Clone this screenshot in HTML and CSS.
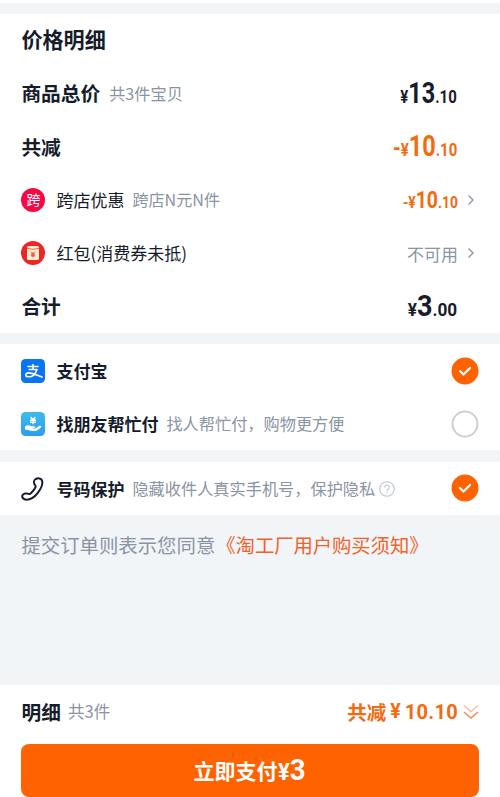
FILE: index.html
```html
<!DOCTYPE html>
<html lang="zh-CN">
<head>
<meta charset="utf-8">
<title>确认订单</title>
<link rel="stylesheet" href="styles.css">
</head>
<body>
<main class="page">
  <div class="prev-card"></div>
  <section class="card prices">
    <div class="row"><h1 class="title">价格明细</h1></div>
    <div class="row"><b class="head">商品总价</b><span class="note count">共3件宝贝</span><span class="price">¥<span class="int">13</span>.10</span></div>
    <div class="row"><b class="head">共减</b><span class="price orange"><span class="minus">-</span>¥<span class="int">10</span>.10</span></div>
    <div class="row detail">
      <span class="badge">跨</span>
      <span class="label">跨店优惠</span><span class="note">跨店N元N件</span>
      <span class="price orange small">-¥<span class="int">10</span>.10</span>
      <svg class="chevron" viewBox="0 0 8 12"><path d="M1.5 1.5 6 6 1.5 10.5"/></svg>
    </div>
    <div class="row detail">
      <svg class="icon" viewBox="0 0 24 24"><circle cx="12" cy="12" r="12" fill="#ed2526"/><rect x="6" y="5" width="12" height="14" rx="1.6" fill="#fff0cf"/><path d="M6 7.3Q12 9.5 18 7.3" fill="none" stroke="#ef6a49"/><path d="m10 10.5 2 2 2-2M9.8 13h4.4M9.8 14.8h4.4M12 12.5v4" fill="none" stroke="#e8382b"/></svg>
      <span class="label">红包(消费券未抵)</span>
      <span class="unavailable">不可用</span>
      <svg class="chevron" viewBox="0 0 8 12"><path d="M1.5 1.5 6 6 1.5 10.5"/></svg>
    </div>
    <div class="row"><b class="head">合计</b><span class="price total">¥<span class="int">3</span>.00</span></div>
  </section>

  <section class="card payments">
    <div class="row">
      <svg class="icon" viewBox="0 0 24 24"><rect width="24" height="24" rx="4.5" fill="#0b74f5"/><g fill="none" stroke="#fff" stroke-linecap="round"><path d="M7 7.600h10M12 5.400v4.800M8 10.500h7.800" stroke-width="1.500"/><path d="M15.800 10.700C14.400 14.800 11.200 17.800 8 17.800c-4.400 0-4.200-3.900-.6-3.900 4 0 8.300 2.300 13.600 4" stroke-width="1.600"/></g></svg>
      <b class="label">支付宝</b>
      <svg class="radio" viewBox="0 0 28 28"><circle cx="14" cy="14" r="13.500" fill="#ff6200"/><path d="m9 14 3.500 3.500 6.500-6.600" class="tick"/></svg>
    </div>
    <div class="row">
      <svg class="icon" viewBox="0 0 24 24"><defs><linearGradient id="sky" x2="0" y2="1"><stop stop-color="#3cbbed"/><stop offset="1" stop-color="#2a9eee"/></linearGradient></defs><rect width="24" height="24" rx="4.500" fill="url(#sky)"/><path d="m9.700 5 2.300 3 2.300-3M9 8.200h6M9 10.200h6M12 8v4.300" fill="none" stroke="#fff" stroke-width="1.400"/><path d="M4 14.500c2.300-2 4.500-1.400 6.200-.2h3.100c1.100 0 1.300 1.500.1 1.700l-3 .2 3.800.2 4.300-2.600c1.500-.6 2.300.7 1.300 1.600-2.300 2.200-4.600 3.700-7.300 3.700-2.500 0-4.300-1.500-8.500-1.700Z" fill="#fff"/></svg>
      <b class="label">找朋友帮忙付</b><span class="note">找人帮忙付，购物更方便</span>
      <svg class="radio" viewBox="0 0 28 28"><circle cx="14" cy="14" r="12.500" fill="#fff" stroke="#cbd0d6" stroke-width="2"/></svg>
    </div>
  </section>

  <section class="card privacy">
    <div class="row">
      <svg class="icon" viewBox="0 0 24 24"><path d="M14.300 2.300C16.600.8 20.200 1 21 3.400c.9 2.900-.9 8.100-4 12.200-3.200 4.200-7.800 7.100-11.600 7.100-2.900 0-4.800-2.400-4-4.300.8-1.800 4.200-2.600 6.300-1.500.9.4 1.700-.1 2.700-1.100 1.600-1.600 3.500-4 4.100-5.700.4-1.100-.2-1.600-.8-2.500-1-1.500-1.100-4.100.6-5.300Z" fill="none" stroke="#161c2b" stroke-width="2" stroke-linejoin="round"/></svg>
      <b class="label">号码保护</b><span class="note privacy-note">隐藏收件人真实手机号，保护隐私</span>
      <svg class="help" viewBox="0 0 16 16"><circle cx="8" cy="8" r="7.300"/><path d="M5.700 6.500c0-3.300 4.700-3.100 4.700-.3C10.400 8 8 7.900 8 9.900m0 1.200v1.200"/></svg>
      <svg class="radio" viewBox="0 0 28 28"><circle cx="14" cy="14" r="13.500" fill="#ff6200"/><path d="m9 14 3.500 3.500 6.500-6.600" class="tick"/></svg>
    </div>
  </section>

  <p class="terms">提交订单则表示您同意<a>《淘工厂用户购买须知》</a></p>

  <footer class="footer">
    <div class="summary">
      <b class="head">明细</b><span class="note">共3件</span>
      <span class="saving"><span>共减</span><span class="yen">¥</span><span class="amount">10.10</span></span>
      <svg class="expand" viewBox="0 0 16 16"><path d="m1 1.500 7 6 7-6" opacity=".55"/><path d="m1 8 7 6 7-6"/></svg>
    </div>
    <button class="pay">立即支付<span class="pay-price">¥<span class="pay-int">3</span></span></button>
  </footer>
</main>
</body>
</html>
```
FILE: styles.css
```css
* { box-sizing: border-box; }
body {
  margin: 0;
  background: #f2f5f8;
  color: #161c2b;
  font-family: "Noto Sans CJK SC", sans-serif;
  font-size: 17px;
  line-height: 1;
}
.page {
  height: 797px;
  display: flex;
  flex-direction: column;
  overflow: hidden;
}
.prev-card { height: 3px; background: #fff; margin-bottom: 11px; }
.card { background: #fff; padding: 0 22px 0 21.400px; margin-bottom: 11px; }
.row { display: flex; align-items: center; height: 53.2px; white-space: nowrap; }
.prices { height: 319px; }
.payments { height: 106px; margin-bottom: 12px; }
.payments .row { height: 53px; }
.privacy { height: 53px; margin-bottom: 0; }
.privacy .row { height: 53px; }
.title { margin: 0; padding-bottom: 2px; font-size: 21.100px; font-weight: 700; }
.head { padding-bottom: 1px; font-size: 19.700px; }
.label { padding-bottom: 1px; }
.note { color: #8a94a3; font-size: 16.200px; margin-left: 9px; padding-bottom: 2px; }
.payments .note, .privacy .note { margin-left: 8px; padding-bottom: 0; }
.icon { width: 24px; height: 24px; margin-right: 11px; flex: none; }
.badge {
  width: 24px;
  height: 24px;
  margin-right: 11px;
  border-radius: 50%;
  background: #f50a45;
  color: #fff;
  font-size: 14px;
  line-height: 23px;
  text-align: center;
}
.detail .note { margin-left: 8px; font-size: 16.100px; }
.price {
  margin-left: auto;
  margin-right: 21px;
  padding-top: 3px;
  font: 700 18.500px/30px Roboto, sans-serif;
  transform: scaleX(.81);
  transform-origin: right center;
}
.int { font-size: 29px; }
.total { transform: scaleX(.93); }
.minus { font-size: 24px; }
.orange { color: #f26a12; }
.price.small { font-size: 17px; margin-right: 0; padding-top: 2px; }
.small .int { font-size: 24px; }
.chevron { width: 8px; height: 12px; margin-left: 9px; margin-right: 3px; }
.chevron path { fill: none; stroke: #8a94a3; stroke-width: 1.300; }
.unavailable { margin-left: auto; color: #8a94a3; }
.radio { width: 28px; height: 28px; margin-left: auto; margin-right: -1px; }
.privacy .radio { margin-bottom: 1px; }
.tick { fill: none; stroke: #fff; stroke-width: 2.200; stroke-linecap: round; stroke-linejoin: round; }
.help { width: 16px; height: 16px; margin-left: 4px; fill: none; stroke: #bdc3cc; stroke-width: 1.100; }
.terms { margin: 19px 21.400px 0; font-size: 19.400px; line-height: 22px; color: #8a94a3; white-space: nowrap; }
.terms a { margin-left: 1px; color: #f0622a; letter-spacing: -.1px; }
.footer { margin-top: auto; height: 112px; padding: 0 21px; background: #fff; }
.summary { display: flex; align-items: center; height: 54px; margin-bottom: 5px; padding-left: .5px; }
.summary .note { margin-left: 7px; font-size: 16.600px; }
.saving { display: flex; align-items: center; margin-left: auto; color: #f26a12; font-size: 19.500px; font-weight: 700; }
.yen { margin: 0 4px; font-family: Roboto, sans-serif; }
.amount { font: 700 20px Roboto, sans-serif; letter-spacing: .3px; }
.expand { width: 16px; height: 16px; margin-left: 5px; fill: none; stroke: #f08a50; stroke-width: 1.400; }
.pay {
  display: flex;
  align-items: center;
  justify-content: center;
  width: 100%;
  height: 53px;
  padding: 0;
  border: 0;
  border-radius: 8px;
  background: #ff6200;
  color: #fff;
  font: 700 21px/1 "Noto Sans CJK SC", sans-serif;
}
.pay-price { padding-top: 2px; font: 700 23px/30px Roboto, sans-serif; transform: scaleX(.95); transform-origin: left; }
.pay-int { font-size: 29px; }
```
